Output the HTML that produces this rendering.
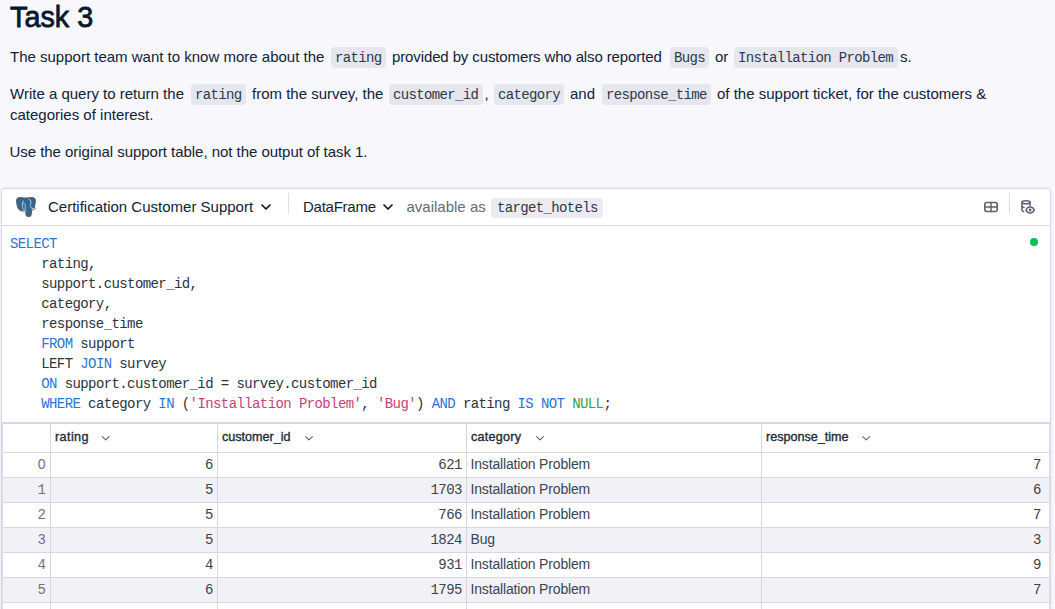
<!DOCTYPE html>
<html><head><meta charset="utf-8">
<style>
*{box-sizing:border-box;margin:0;padding:0}
html,body{width:1055px;height:609px;overflow:hidden;background:#f7f7fc;font-family:"Liberation Sans",sans-serif;color:#05192d}
.a{position:absolute;white-space:pre}
.s{font-size:15px;line-height:21px;color:#112338}
.m{font-family:"Liberation Mono",monospace;font-size:14px;line-height:21px;letter-spacing:-0.65px;color:#2c3949}
.chip{position:absolute;background:#e6e6ef;border-radius:4px}
.hl{position:absolute;background:#dcdce8}
.tl{position:absolute;background:#d6d6e4}
.cell{position:absolute;left:1px;top:188px;width:1050px;height:430px;background:#fff;border:1px solid #dadae6;border-radius:4px;box-shadow:0 0 3px rgba(60,60,110,0.10)}
.code{position:absolute;left:10px;top:234px;font-family:"Liberation Mono",monospace;font-size:14px;line-height:20px;letter-spacing:-0.595px;white-space:pre;color:#2b3340}
.kw{color:#2a74d6}.str{color:#c63f7a}.nul{color:#2fa344}
.th{font-size:12.6px;font-weight:normal;-webkit-text-stroke:0.35px #1d2a39;line-height:20px;color:#1d2a39}
.idx{font-family:"Liberation Mono",monospace;font-size:14px;line-height:25px;letter-spacing:-0.5px;color:#6b7482;text-align:right}
.num{font-family:"Liberation Mono",monospace;font-size:14px;line-height:25px;letter-spacing:-0.5px;color:#3a4350;text-align:right}
.cat{font-size:14px;line-height:25px;letter-spacing:-0.17px;color:#3a4452}
</style></head><body>
<span class="a" style="left:10px;top:-0.8px;font-size:29.5px;line-height:36px;font-weight:normal;-webkit-text-stroke:0.8px #05192d;transform:scaleX(0.975);transform-origin:0 0">Task 3</span>

<!-- para 1 -->
<span class="a s" style="left:10px;top:46px">The support team want to know more about the</span>
<div class="chip" style="left:331px;top:47px;width:55px;height:21px"></div>
<span class="a m" style="left:335px;top:47.5px">rating</span>
<span class="a s" style="left:392px;top:46px;letter-spacing:-0.12px">provided by customers who also reported</span>
<div class="chip" style="left:670px;top:47px;width:39px;height:21px"></div>
<span class="a m" style="left:674px;top:47.5px">Bugs</span>
<span class="a s" style="left:715px;top:46px">or</span>
<div class="chip" style="left:734px;top:47px;width:164px;height:21px"></div>
<span class="a m" style="left:738px;top:47.5px">Installation Problem</span>
<span class="a s" style="left:900px;top:46px">s.</span>

<!-- para 2 -->
<span class="a s" style="left:10px;top:83px">Write a query to return the</span>
<div class="chip" style="left:191px;top:84px;width:55px;height:21px"></div>
<span class="a m" style="left:195px;top:84.5px">rating</span>
<span class="a s" style="left:252px;top:83px">from the survey, the</span>
<div class="chip" style="left:389px;top:84px;width:94px;height:21px"></div>
<span class="a m" style="left:393px;top:84.5px">customer_id</span>
<span class="a s" style="left:484.5px;top:83px">,</span>
<div class="chip" style="left:494px;top:84px;width:70px;height:21px"></div>
<span class="a m" style="left:498px;top:84.5px">category</span>
<span class="a s" style="left:570px;top:83px">and</span>
<div class="chip" style="left:602px;top:84px;width:109px;height:21px"></div>
<span class="a m" style="left:606px;top:84.5px">response_time</span>
<span class="a s" style="left:717px;top:83px">of the support ticket, for the customers &amp;</span>
<span class="a s" style="left:10px;top:104px">categories of interest.</span>

<!-- para 3 -->
<span class="a s" style="left:9.5px;top:141px;letter-spacing:-0.04px">Use the original support table, not the output of task 1.</span>

<!-- cell -->
<div class="cell"></div>
<div class="hl" style="left:2px;top:225px;width:1048px;height:1px"></div>
<span class="a s" style="left:48px;top:196px">Certification Customer Support</span>
<div class="hl" style="left:288px;top:193px;width:1px;height:21px;background:#dfe0e7"></div>
<span class="a s" style="left:303px;top:196px;letter-spacing:-0.25px">DataFrame</span>
<span class="a s" style="left:406.5px;top:196px;color:#646c79">available as</span>
<div class="chip" style="left:491px;top:198px;width:112px;height:20px;background:#ebebf1"></div>
<span class="a m" style="left:497px;top:197.5px">target_hotels</span>
<div class="hl" style="left:1009px;top:193px;width:1px;height:21px;background:#dfe0e7"></div>

<div class="code"><span class="kw">SELECT</span>
    rating,
    support.customer_id,
    category,
    response_time
    <span class="kw">FROM</span> support
    LEFT <span class="kw">JOIN</span> survey
    <span class="kw">ON</span> support.customer_id = survey.customer_id
    <span class="kw">WHERE</span> category <span class="kw">IN</span> (<span class="str">'Installation Problem'</span>, <span class="str">'Bug'</span>) <span class="kw">AND</span> rating <span class="kw">IS NOT</span> <span class="nul">NULL</span>;</div>
<div class="a" style="left:1030px;top:238px;width:8px;height:8px;border-radius:50%;background:#04c450"></div>

<!-- table -->
<div class="a" style="left:2px;top:478px;width:1048px;height:24px;background:#f2f2f6"></div>
<div class="a" style="left:2px;top:528px;width:1048px;height:24px;background:#f2f2f6"></div>
<div class="a" style="left:2px;top:578px;width:1048px;height:24px;background:#f2f2f6"></div>
<div class="tl" style="left:1px;top:422px;width:1050px;height:2px"></div>
<div class="tl" style="left:2px;top:452px;width:1048px;height:1px"></div>
<div class="tl" style="left:2px;top:477px;width:1048px;height:1px"></div>
<div class="tl" style="left:2px;top:502px;width:1048px;height:1px"></div>
<div class="tl" style="left:2px;top:527px;width:1048px;height:1px"></div>
<div class="tl" style="left:2px;top:552px;width:1048px;height:1px"></div>
<div class="tl" style="left:2px;top:577px;width:1048px;height:1px"></div>
<div class="tl" style="left:2px;top:602px;width:1048px;height:1px"></div>
<div class="tl" style="left:2px;top:424px;width:1px;height:190px;background:#dcdce8"></div>
<div class="tl" style="left:1049px;top:424px;width:1px;height:190px;background:#dcdce8"></div>
<div class="tl" style="left:50px;top:424px;width:1px;height:190px"></div>
<div class="tl" style="left:217px;top:424px;width:1px;height:190px"></div>
<div class="tl" style="left:466px;top:424px;width:1px;height:190px"></div>
<div class="tl" style="left:761px;top:424px;width:1px;height:190px"></div>

<span class="a th" style="left:55px;top:427px;letter-spacing:0.4px">rating</span>
<span class="a th" style="left:222px;top:427px">customer_id</span>
<span class="a th" style="left:471px;top:427px;letter-spacing:0.25px">category</span>
<span class="a th" style="left:766px;top:427px">response_time</span>
<span class="a idx" style="left:-1px;top:452px;width:46.5px;font-family:'Liberation Sans',sans-serif;letter-spacing:0;font-size:14px">0</span>
<span class="a num" style="left:51px;top:453px;width:162px">6</span>
<span class="a num" style="left:218px;top:453px;width:244px">621</span>
<span class="a cat" style="left:470.5px;top:452px">Installation Problem</span>
<span class="a num" style="left:762px;top:453px;width:279px">7</span>
<span class="a idx" style="left:-1px;top:478px;width:46.5px">1</span>
<span class="a num" style="left:51px;top:478px;width:162px">5</span>
<span class="a num" style="left:218px;top:478px;width:244px">1703</span>
<span class="a cat" style="left:470.5px;top:477px">Installation Problem</span>
<span class="a num" style="left:762px;top:478px;width:279px">6</span>
<span class="a idx" style="left:-1px;top:503px;width:46.5px">2</span>
<span class="a num" style="left:51px;top:503px;width:162px">5</span>
<span class="a num" style="left:218px;top:503px;width:244px">766</span>
<span class="a cat" style="left:470.5px;top:502px">Installation Problem</span>
<span class="a num" style="left:762px;top:503px;width:279px">7</span>
<span class="a idx" style="left:-1px;top:528px;width:46.5px">3</span>
<span class="a num" style="left:51px;top:528px;width:162px">5</span>
<span class="a num" style="left:218px;top:528px;width:244px">1824</span>
<span class="a cat" style="left:470.5px;top:527px">Bug</span>
<span class="a num" style="left:762px;top:528px;width:279px">3</span>
<span class="a idx" style="left:-1px;top:553px;width:46.5px">4</span>
<span class="a num" style="left:51px;top:553px;width:162px">4</span>
<span class="a num" style="left:218px;top:553px;width:244px">931</span>
<span class="a cat" style="left:470.5px;top:552px">Installation Problem</span>
<span class="a num" style="left:762px;top:553px;width:279px">9</span>
<span class="a idx" style="left:-1px;top:578px;width:46.5px">5</span>
<span class="a num" style="left:51px;top:578px;width:162px">6</span>
<span class="a num" style="left:218px;top:578px;width:244px">1795</span>
<span class="a cat" style="left:470.5px;top:577px">Installation Problem</span>
<span class="a num" style="left:762px;top:578px;width:279px">7</span>
<svg class="a" style="left:0;top:0" width="1055" height="609" viewBox="0 0 1055 609">
<g fill="none" stroke-linecap="round" stroke-linejoin="round">
<polyline points="262,205 266,209 270,205" stroke="#05192d" stroke-width="1.7"/>
<polyline points="384,205 388,209 392,205" stroke="#05192d" stroke-width="1.7"/>
<rect x="984.8" y="202.5" width="12.4" height="9" rx="2" stroke="#5a6472" stroke-width="1.6"/>
<line x1="991" y1="202.5" x2="991" y2="211.5" stroke="#5a6472" stroke-width="1.5"/>
<line x1="984.8" y1="207" x2="997.2" y2="207" stroke="#5a6472" stroke-width="1.5"/>
<ellipse cx="1026" cy="202.3" rx="4.05" ry="1.55" stroke="#5a6472" stroke-width="1.5"/>
<path d="M1021.95,202.2 V210 Q1022,211.3 1023.6,211.6" stroke="#5a6472" stroke-width="1.5"/>
<path d="M1030.05,202.2 V206" stroke="#5a6472" stroke-width="1.5"/>
<path d="M1021.95,206.3 Q1022.5,207.2 1024,207.4" stroke="#5a6472" stroke-width="1.5"/>
<path d="M1025.95,210 C1027.6,206.1 1032.6,206.1 1034.25,210 C1032.6,213.9 1027.6,213.9 1025.95,210 Z" fill="#fff" stroke="#5a6472" stroke-width="1.5"/>
<circle cx="1030.1" cy="210" r="1.4" fill="#5a6472" stroke="none"/>
<polyline points="102.3,436.6 105.7,439.8 109.1,436.6" stroke="#5b6472" stroke-width="1.1"/>
<polyline points="305.6,436.6 309,439.8 312.4,436.6" stroke="#5b6472" stroke-width="1.1"/>
<polyline points="536.6,436.6 540,439.8 543.4,436.6" stroke="#5b6472" stroke-width="1.1"/>
<polyline points="862.8,436.6 866.2,439.8 869.6,436.6" stroke="#5b6472" stroke-width="1.1"/>
</g>
<g transform="translate(16,197)">
<path d="M0.6,3.6 C0.5,1.6 1.8,0.6 3.8,0.6 L8.6,1 C9.4,1.1 10.2,1.1 11,1 L16.2,0.6 C18.4,0.6 19.5,1.8 19.4,3.6 C19.3,6 18.9,8.6 18.2,10.4 L19.5,11.3 L17.9,12.4 C17,13 16,13.4 15.5,14.2 L15.1,18 C14.9,19.3 14.1,19.6 12.5,19.6 C10.9,19.6 10.3,19.3 10.1,18 L9.8,14.6 C8.5,14.8 7,14.8 5.6,14.4 C3.6,13.6 2,11.6 1.4,9.5 C0.9,7.6 0.6,5.6 0.6,3.6 Z" fill="#336791" stroke="#555" stroke-width="1"/>
<path d="M7.4,3.6 C6.4,5.2 6.2,8.2 6.6,10.4 C6.9,12.2 8,13.2 9.4,12.9" fill="none" stroke="#d4e2ef" stroke-width="0.8"/>
<path d="M6.9,6.6 C7.8,6 9,6.2 9.2,7.6 C9.3,9 9,10.8 9.4,12.6" fill="none" stroke="#d4e2ef" stroke-width="0.7"/>
<path d="M12.6,1.8 C14.6,2.8 15.6,5 14.6,7.4 C14,8.9 14.3,10.8 16.6,11.4" fill="none" stroke="#d4e2ef" stroke-width="0.8"/>
<path d="M3.6,14.2 L10.2,14.3" fill="none" stroke="#ffffff" stroke-width="0.8"/>
<path d="M15.8,11.6 L19.2,11.4 M15.8,13.1 L18.4,12.6" fill="none" stroke="#ffffff" stroke-width="0.6"/>
</g>
</svg>
</body></html>
